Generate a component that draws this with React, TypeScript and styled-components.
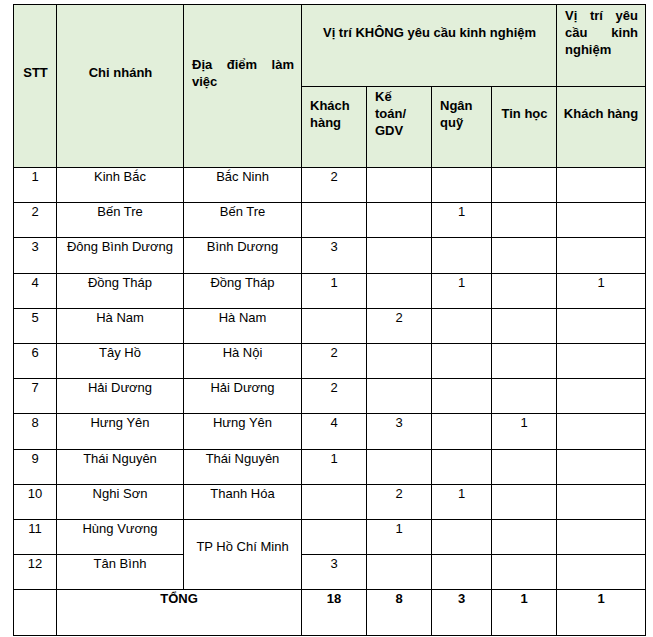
import React from "react";
import styled, { createGlobalStyle } from "styled-components";

const Global = createGlobalStyle`
  html, body { margin: 0; padding: 0; background: #ffffff; }
  body { font-family: "Liberation Sans", Arial, sans-serif; color: #000; }
`;

const Page = styled.div`
  padding: 4px 0 0 13px;
`;

const Table = styled.table`
  border-collapse: collapse;
  table-layout: fixed;
  width: 632px;
  font-family: "Liberation Sans", Arial, sans-serif;
  font-size: 13px;
  line-height: 17px;
`;

type Align = "left" | "center" | "justify";

const HeadCell = styled.th<{ $align?: Align; $h?: number; $tight?: boolean }>`
  background: #e2efda;
  border: 1px solid #000;
  padding: ${(p) => (p.$tight ? "0 4px" : "0 7px 0 8px")};
  font-weight: bold;
  text-align: ${(p) => p.$align ?? "center"};
  vertical-align: middle;
  height: ${(p) => (p.$h ? `${p.$h}px` : "auto")};
`;

const Cell = styled.td<{ $bold?: boolean; $h?: number }>`
  border: 1px solid #000;
  padding: 0 4px;
  text-align: center;
  vertical-align: middle;
  font-weight: ${(p) => (p.$bold ? "bold" : "normal")};
  height: ${(p) => (p.$h ? `${p.$h}px` : "auto")};
`;

const Text = styled.div<{ $trail: number }>`
  padding-bottom: ${(p) => p.$trail}px;
`;

type Row = {
  stt: number;
  branch: string;
  place?: string;
  placeSpan?: number;
  kh?: number;
  kt?: number;
  nq?: number;
  th?: number;
  kn?: number;
};

const rows: Row[] = [
  { stt: 1, branch: "Kinh Bắc", place: "Bắc Ninh", kh: 2 },
  { stt: 2, branch: "Bến Tre", place: "Bến Tre", nq: 1 },
  { stt: 3, branch: "Đông Bình Dương", place: "Bình Dương", kh: 3 },
  { stt: 4, branch: "Đồng Tháp", place: "Đồng Tháp", kh: 1, nq: 1, kn: 1 },
  { stt: 5, branch: "Hà Nam", place: "Hà Nam", kt: 2 },
  { stt: 6, branch: "Tây Hồ", place: "Hà Nội", kh: 2 },
  { stt: 7, branch: "Hải Dương", place: "Hải Dương", kh: 2 },
  { stt: 8, branch: "Hưng Yên", place: "Hưng Yên", kh: 4, kt: 3, th: 1 },
  { stt: 9, branch: "Thái Nguyên", place: "Thái Nguyên", kh: 1 },
  { stt: 10, branch: "Nghi Sơn", place: "Thanh Hóa", kt: 2, nq: 1 },
  { stt: 11, branch: "Hùng Vương", place: "TP Hồ Chí Minh", placeSpan: 2, kt: 1 },
  { stt: 12, branch: "Tân Bình", kh: 3 },
];

const widths = [43, 127, 118, 65, 65, 60, 65, 89];

const H = ({ children }: { children: React.ReactNode }) => <Text $trail={27}>{children}</Text>;
const B = ({ children }: { children?: React.ReactNode }) => <Text $trail={17}>{children ?? "\u00a0"}</Text>;

export default function App() {
  return (
    <>
      <Global />
      <Page>
        <Table>
          <colgroup>
            {widths.map((w, i) => (
              <col key={i} style={{ width: w }} />
            ))}
          </colgroup>
          <thead>
            <tr>
              <HeadCell rowSpan={2}><H>STT</H></HeadCell>
              <HeadCell rowSpan={2}><H>Chi nhánh</H></HeadCell>
              <HeadCell rowSpan={2} $align="justify"><H>Địa điểm làm việc</H></HeadCell>
              <HeadCell colSpan={4} $h={81}><H>Vị trí KHÔNG yêu cầu kinh nghiệm</H></HeadCell>
              <HeadCell $align="justify"><H>Vị trí yêu cầu kinh nghiệm</H></HeadCell>
            </tr>
            <tr>
              <HeadCell $align="left" $h={80}><H>Khách hàng</H></HeadCell>
              <HeadCell $align="left"><H>Kế toán/ GDV</H></HeadCell>
              <HeadCell $align="left"><H>Ngân quỹ</H></HeadCell>
              <HeadCell><H>Tin học</H></HeadCell>
              <HeadCell $tight><H>Khách hàng</H></HeadCell>
            </tr>
          </thead>
          <tbody>
            {rows.map((r) => (
              <tr key={r.stt}>
                <Cell $h={34.2}><B>{r.stt}</B></Cell>
                <Cell><B>{r.branch}</B></Cell>
                {r.place && (
                  <Cell rowSpan={r.placeSpan ?? 1}><B>{r.place}</B></Cell>
                )}
                <Cell><B>{r.kh}</B></Cell>
                <Cell><B>{r.kt}</B></Cell>
                <Cell><B>{r.nq}</B></Cell>
                <Cell><B>{r.th}</B></Cell>
                <Cell><B>{r.kn}</B></Cell>
              </tr>
            ))}
            <tr>
              <Cell $h={45} />
              <Cell colSpan={2} $bold><Text $trail={28}>TỔNG</Text></Cell>
              <Cell $bold><Text $trail={28}>18</Text></Cell>
              <Cell $bold><Text $trail={28}>8</Text></Cell>
              <Cell $bold><Text $trail={28}>3</Text></Cell>
              <Cell $bold><Text $trail={28}>1</Text></Cell>
              <Cell $bold><Text $trail={28}>1</Text></Cell>
            </tr>
          </tbody>
        </Table>
      </Page>
    </>
  );
}
